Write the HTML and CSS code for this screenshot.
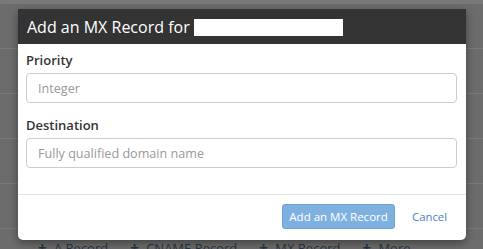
FILE: index.html
```html
<!DOCTYPE html>
<html lang="en">
<head>
    <meta charset="UTF-8">
    <title>Add an MX Record</title>
    <link rel="stylesheet" href="styles.css">
</head>
<body>
    <div class="page">
        <div class="topbar"></div>
        <div class="table">
            <div class="row"></div>
            <div class="row"></div>
            <div class="row"></div>
            <div class="row"></div>
            <div class="row"></div>
        </div>
        <div class="actions">
            <span class="action"><b>+</b> A Record</span>
            <span class="action"><b>+</b> CNAME Record</span>
            <span class="action"><b>+</b> MX Record</span>
            <span class="action"><b>+</b> More</span>
        </div>
    </div>

    <div class="modal">
        <div class="modal-header">
            <h3>Add an MX Record for <span class="redacted"></span></h3>
        </div>
        <div class="modal-body">
            <div class="form-group">
                <label>Priority</label>
                <input type="text" placeholder="Integer">
            </div>
            <div class="form-group">
                <label>Destination</label>
                <input type="text" placeholder="Fully qualified domain name">
            </div>
        </div>
        <div class="modal-footer">
            <button class="btn-primary" disabled>Add an MX Record</button>
            <a class="cancel" href="#">Cancel</a>
        </div>
    </div>
</body>
</html>
```

FILE: styles.css
```css
body {
    margin: 0;
    font-family: 'Open Sans', sans-serif;
    background: #6c6c6c;
    overflow: hidden;
}

.page {
    height: 249px;
}

.topbar {
    height: 4px;
    background: #787878;
}

.row {
    height: 44px;
    border-bottom: 1px solid #7a7a7a;
}

.actions {
    display: flex;
    gap: 22px;
    padding: 8px 0 0 38px;
    font-size: 13px;
    color: #2a3440;
}

.action b {
    font-size: 15px;
    margin-right: 4px;
}

.modal {
    position: absolute;
    top: 9px;
    left: 18px;
    width: 448px;
    height: 231px;
    background: #fff;
    border-radius: 0 0 5px 5px;
    box-shadow: 0 3px 9px rgba(0,0,0,0.4);
    display: flex;
    flex-direction: column;
}

.modal-header {
    background: #333;
    height: 35px;
    padding: 0 9px;
    display: flex;
    align-items: center;
}

h3 {
    margin: 0;
    color: #fff;
    font-size: 16px;
    font-weight: 400;
    display: flex;
    align-items: center;
    gap: 4px;
}

.redacted {
    display: inline-block;
    width: 149px;
    height: 17px;
    background: #fff;
    margin-top: 1px;
}

.modal-body {
    padding: 7px 9px 0 8px;
    height: 143px;
    border-bottom: 1px solid #e5e5e5;
}

.form-group {
    margin-bottom: 13px;
}

label {
    display: block;
    font-size: 13px;
    font-weight: 600;
    color: #333;
    margin-bottom: 4px;
}

input {
    box-sizing: border-box;
    width: 100%;
    height: 30px;
    border: 1px solid #ccc;
    border-radius: 4px;
    padding: 0 11px;
    font-family: 'Open Sans', sans-serif;
    font-size: 12.6px;
}

input::placeholder {
    color: #999;
}

.modal-footer {
    display: flex;
    justify-content: flex-end;
    align-items: center;
    gap: 17px;
    padding: 9px 19px 0 0;
}

.btn-primary {
    width: 113px;
    height: 25px;
    background: #7fb1e0;
    border: 1px solid #6fa3d6;
    border-radius: 3px;
    color: #fff;
    font-family: 'Open Sans', sans-serif;
    font-size: 11.5px;
    font-weight: 400;
    padding: 0;
}

.cancel {
    color: #4a82c3;
    font-size: 11.3px;
    text-decoration: none;
}
```
